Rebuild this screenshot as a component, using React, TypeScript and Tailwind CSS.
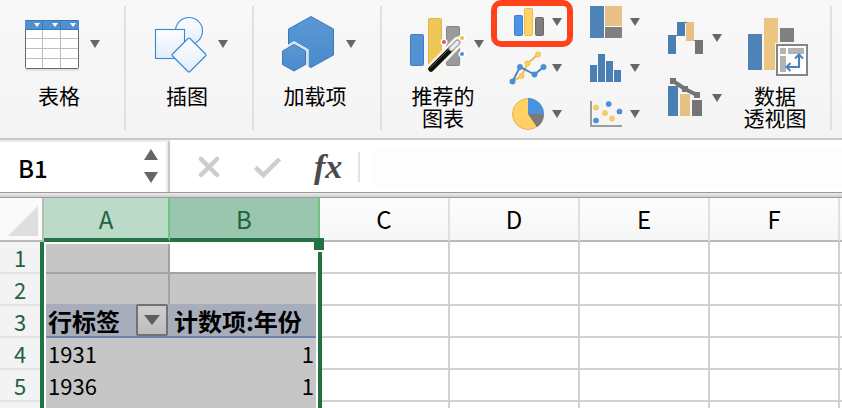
import type { ReactNode } from "react";

const fontStack = "font-['Noto_Sans_CJK_SC',sans-serif]";

function Caret({ className = "" }: { className?: string }) {
  return (
    <svg viewBox="0 0 10 8" className={`h-2 w-2.5 shrink-0 ${className}`} aria-hidden="true">
      <path d="M0 0H10L5 8Z" fill="#666" />
    </svg>
  );
}

function LargeButton({ text, art, caret = true }: { text: string; art: ReactNode; caret?: boolean }) {
  return (
    <button type="button" className="flex items-start">
      <span className="flex w-16 flex-col items-center">
        {art}
        <span className="pl-0.5 text-[21px] leading-[22px] whitespace-pre text-black">{text}</span>
      </span>
      {caret && <Caret className="mt-10" />}
    </button>
  );
}

function ChartButton({ label, tall = false, children }: { label: string; tall?: boolean; children: ReactNode }) {
  return (
    <button
      type="button"
      aria-label={label}
      className={`relative flex items-center gap-1 ${tall ? "h-[60px]" : "h-11"}`}
    >
      {children}
      <Caret />
    </button>
  );
}

function Separator() {
  return <div className="mt-1.5 h-[124px] w-0.5 shrink-0 bg-[#e0e0e0]" />;
}

const TableArt = (
  <svg viewBox="26 0 64 84" className="h-[84px] w-16 overflow-visible" aria-hidden="true">
    <rect x="26" y="22" width="53" height="49" rx="1" fill="#000" opacity="0.08" />
    <rect x="25.5" y="20.5" width="53" height="48" rx="1" fill="#fff" stroke="#666" />
    <path d="M26 38.500H78M26 48.500H78M26 58.500H78M42.500 30V68M60.500 30V68" stroke="#bdbdbd" />
    <path d="M25 21a1 1 0 0 1 1-1H78a1 1 0 0 1 1 1V30H25Z" fill="#4f90d0" />
    <path d="M42.500 20V30M60.500 20V30M25 29.500H79M26 20.500H78" stroke="#3a78b8" />
    <path d="M34 23h6l-3 4zM52 23h6l-3 4zM70 23h6l-3 4z" fill="#fff" />
  </svg>
);

const ShapesArt = (
  <svg viewBox="154 0 64 84" className="h-[84px] w-16" aria-hidden="true">
    <defs>
      <linearGradient id="shapeFill" x1="0" y1="0" x2="0" y2="1">
        <stop offset="0" stopColor="#fdfeff" />
        <stop offset="1" stopColor="#e1edf9" />
      </linearGradient>
    </defs>
    <g fill="url(#shapeFill)" stroke="#3a87d9" strokeWidth="1.1">
      <circle cx="189" cy="31" r="13.500" />
      <rect x="155.500" y="29.500" width="29" height="29" />
      <path d="M188 38.500q1-1 2 0L205.500 54q1 1 0 2L190 71.500q-1 1-2 0L172.500 56q-1-1 0-2Z" />
    </g>
  </svg>
);

const AddInsArt = (
  <svg viewBox="282 0 64 84" className="h-[84px] w-16 overflow-visible" aria-hidden="true">
    <defs>
      <linearGradient id="hexFill" x1="0" y1="0" x2="0" y2="1">
        <stop offset="0" stopColor="#5b98d4" />
        <stop offset="1" stopColor="#4a89cc" />
      </linearGradient>
    </defs>
    <path d="M311 16.500L333.500 29V55L311 67.500L288.500 55V29Z" fill="url(#hexFill)" stroke="#3a79bd" />
    <path d="M294 41L308.500 49.500V67L294 74L280 66V50Z" fill="#f6f6f6" />
    <path d="M288 45L294 41.500L308.500 49.500V66L306 64.500V52L294 45L288 48Z" fill="#d3e1f1" />
    <path d="M294 44.500L305.500 51V64.500L294 71L282.500 64.500V51Z" fill="url(#hexFill)" stroke="#3a79bd" />
  </svg>
);

const RecommendedArt = (
  <svg viewBox="410 0 64 84" className="h-[84px] w-16" aria-hidden="true">
    <rect x="410.500" y="34.500" width="13" height="31" rx="1" fill="#5393d3" stroke="#3c7fc4" />
    <rect x="428.500" y="18.500" width="13" height="47" rx="1" fill="#efc658" stroke="#ddb54b" />
    <rect x="446.500" y="26.500" width="13" height="39" rx="1" fill="#9b9b9e" stroke="#858587" />
    <path d="M431 69.500L458 42" stroke="#faf4e5" strokeWidth="11" strokeLinecap="round" />
    <circle cx="444" cy="42" r="3.500" fill="#fff" />
    <circle cx="462" cy="38" r="3.500" fill="#fff" />
    <circle cx="462" cy="54" r="3.500" fill="#fff" />
    <path d="M431 69L451 49" stroke="#111" strokeWidth="5.500" strokeLinecap="round" />
    <path d="M430 68L450 48" stroke="#555" />
    <path d="M451.500 48.500L457.500 42.500" stroke="#9a9da5" strokeWidth="6" strokeLinecap="round" />
    <path d="M451.500 48.500L457.500 42.500" stroke="#e9edf2" strokeWidth="3.500" strokeLinecap="round" />
    <circle cx="444" cy="42" r="2" fill="#d9534f" />
    <circle cx="462" cy="38" r="2" fill="#f0c040" />
    <circle cx="462" cy="54" r="2" fill="#4b91d8" />
  </svg>
);

const PivotArt = (
  <svg viewBox="742 0 64 84" className="h-[84px] w-16 overflow-visible" aria-hidden="true">
    <rect x="748" y="34" width="14" height="36" fill="#4f83b7" />
    <rect x="764" y="18" width="14" height="52" fill="#ebc681" />
    <rect x="780" y="28" width="14" height="14" fill="#808080" />
    <rect x="775" y="43" width="34" height="34" fill="#f6f6f6" />
    <rect x="777" y="45" width="30" height="30" fill="#fff" stroke="#858585" strokeWidth="2" />
    <path d="M780 48h6v6h-6zM788 48h16v6h-16zM780 56h6v16h-6z" fill="#b3b3b3" />
    <path d="M788 67H799V56" fill="none" stroke="#f8f8f8" strokeWidth="5" />
    <path
      d="M788 67H799V56M790.500 63L786.500 67L790.500 71M795 58.500L799 54.500L803 58.500"
      fill="none"
      stroke="#4782ba"
      strokeWidth="2"
    />
  </svg>
);

function Ribbon() {
  return (
    <header className="flex h-[140px] shrink-0 items-start border-b-2 border-[#c8c8c8] bg-linear-to-b from-[#f8f8f8] to-[#f4f4f4]">
      <div className="flex w-[124px] shrink-0 pl-[26px]">
        <LargeButton text="表格" art={TableArt} />
      </div>
      <Separator />
      <div className="flex w-[126px] shrink-0 pl-7">
        <LargeButton text="插图" art={ShapesArt} />
      </div>
      <Separator />
      <div className="flex w-[126px] shrink-0 pl-7">
        <LargeButton text="加载项" art={AddInsArt} />
      </div>
      <Separator />
      <div className="flex shrink-0 items-start gap-6 pr-6 pl-7">
        <LargeButton text={"推荐的\n图表"} art={RecommendedArt} />
        <div className="flex flex-col gap-0.5">
          <ChartButton label="柱形图">
            <svg viewBox="508 0 40 44" className="h-11 w-10" aria-hidden="true">
              <rect x="514.500" y="15.500" width="8" height="20" rx="1" fill="#4a94e3" stroke="#3a80cc" />
              <rect x="524.500" y="8.500" width="8" height="27" rx="1" fill="#ffd264" stroke="#e6bb56" />
              <rect x="535.500" y="17.500" width="8" height="18" rx="1" fill="#7d7d7d" stroke="#6a6a6a" />
            </svg>
            <span className="absolute top-0 -left-[17px] h-[47px] w-[82px] rounded-[10px] border-[6px] border-[#ff421c]" />
          </ChartButton>
          <ChartButton label="折线图">
            <svg viewBox="508 46 40 44" className="h-11 w-10" aria-hidden="true">
              <path d="M512.500 81.500L521.500 76L527.500 63.500L538 54.500" fill="none" stroke="#e6b94e" strokeWidth="1.800" />
              <g fill="#fbcd5e" stroke="#e6b94e" strokeWidth="0.500">
                <circle cx="521.500" cy="76" r="2.700" />
                <circle cx="527.500" cy="63.500" r="2.700" />
                <circle cx="538" cy="54.500" r="2.700" />
              </g>
              <path d="M512.500 81.500L520 67L534.500 74.500L543.500 67" fill="none" stroke="#3f7fc8" strokeWidth="1.800" />
              <g fill="#4a90dd" stroke="#3f7fc8" strokeWidth="0.500">
                <circle cx="512.500" cy="81.500" r="2.700" />
                <circle cx="520" cy="67" r="2.700" />
                <circle cx="534.500" cy="74.500" r="2.700" />
                <circle cx="543.500" cy="67" r="2.700" />
              </g>
            </svg>
          </ChartButton>
          <ChartButton label="饼图">
            <svg viewBox="508 92 40 44" className="h-11 w-10" aria-hidden="true">
              <circle cx="528" cy="114" r="15.500" fill="#ffd164" stroke="#e2b651" />
              <path d="M528 114V98A16 16 0 0 1 544 114Z" fill="#4a92e0" />
              <path d="M528 114H544A16 16 0 0 1 537 127.200Z" fill="#7a7a7a" />
            </svg>
          </ChartButton>
        </div>
        <div className="flex flex-col gap-0.5">
          <ChartButton label="层次结构图">
            <svg viewBox="586 0 40 44" className="h-11 w-10" aria-hidden="true">
              <rect x="590" y="6" width="14" height="32" fill="#4f83b8" />
              <rect x="605" y="6" width="17" height="20" fill="#e9c187" />
              <rect x="605" y="27" width="17" height="11" fill="#808080" />
            </svg>
          </ChartButton>
          <ChartButton label="统计图">
            <svg viewBox="586 46 40 44" className="h-11 w-10" aria-hidden="true">
              <path d="M590 65h7v17h-7zM598 54h7v28h-7zM606 61h7v21h-7zM614 70h7v12h-7z" fill="#4a7fb5" />
            </svg>
          </ChartButton>
          <ChartButton label="散点图">
            <svg viewBox="586 92 40 44" className="h-11 w-10" aria-hidden="true">
              <path d="M591 101V126H622" fill="none" stroke="#808080" strokeWidth="1.500" />
              <g fill="#fbcd5e" stroke="#e6b94e" strokeWidth="0.500">
                <circle cx="596" cy="107.500" r="2.600" />
                <circle cx="605" cy="113" r="2.600" />
                <circle cx="612" cy="118.500" r="2.600" />
              </g>
              <g fill="#4a90dd" stroke="#3f7fc8" strokeWidth="0.500">
                <circle cx="608.700" cy="104" r="2.600" />
                <circle cx="619.500" cy="111.500" r="2.600" />
                <circle cx="596" cy="120.500" r="2.600" />
              </g>
            </svg>
          </ChartButton>
        </div>
        <div className="flex flex-col pt-2">
          <ChartButton label="瀑布图" tall>
            <svg viewBox="664 8 44 60" className="h-[60px] w-11" aria-hidden="true">
              <path d="M668 35h8v19h-8zM677 22h8v14h-8z" fill="#4a7fb3" />
              <rect x="686" y="22" width="8" height="19" fill="#e8c084" />
              <rect x="695" y="40" width="8" height="14" fill="#747474" />
              <path d="M676 35.500H678M684 22.500H687M694 40.500H696" stroke="#777" />
            </svg>
          </ChartButton>
          <ChartButton label="组合图" tall>
            <svg viewBox="664 68 44 60" className="h-[60px] w-11" aria-hidden="true">
              <rect x="668" y="86" width="10" height="30" fill="#4a7fb3" />
              <rect x="680" y="94" width="10" height="22" fill="#e8c084" />
              <rect x="692" y="100" width="10" height="16" fill="#747474" />
              <path d="M673 81L685 89L697 95" fill="none" stroke="#747474" strokeWidth="4" />
              <path d="M670 78h6v6h-6zM682 86h6v6h-6zM694 92h6v6h-6z" fill="#747474" />
            </svg>
          </ChartButton>
        </div>
        <div className="-ml-1">
          <LargeButton text={"数据\n透视图"} art={PivotArt} caret={false} />
        </div>
      </div>
      <Separator />
    </header>
  );
}

function FormulaBar() {
  return (
    <div className="flex h-[52px] shrink-0 bg-white">
      <div className="flex w-[170px] shrink-0 items-center border-t-2 border-r-2 border-t-[#ececec] border-r-[#c8c8c8]">
        <input
          aria-label="名称框"
          defaultValue="B1"
          className="h-full w-36 bg-transparent pl-[18px] text-2xl font-medium text-black outline-none"
        />
        <div className="flex h-full flex-1 flex-col items-start gap-3 border-r-2 border-[#ececec] pt-[7px]">
          <button type="button" aria-label="上一个">
            <svg viewBox="0 0 14 11" className="h-[11px] w-3.5" aria-hidden="true">
              <path d="M0 11H14L7 0Z" fill="#666" />
            </svg>
          </button>
          <button type="button" aria-label="下一个">
            <svg viewBox="0 0 14 11" className="h-[11px] w-3.5" aria-hidden="true">
              <path d="M0 0H14L7 11Z" fill="#666" />
            </svg>
          </button>
        </div>
      </div>
      <div className="flex shrink-0 items-center pt-0.5 pl-7">
        <button type="button" aria-label="取消" className="mr-8">
          <svg viewBox="0 0 24 24" className="size-6" aria-hidden="true">
            <path d="M3 4L19 20M19 4L3 20" stroke="#cdcdcd" strokeWidth="4.500" strokeLinecap="round" />
          </svg>
        </button>
        <button type="button" aria-label="输入" className="mr-[30px]">
          <svg viewBox="0 0 30 24" className="h-6 w-[30px]" aria-hidden="true">
            <path d="M1.500 12.500L9.500 20L25.500 4" fill="none" stroke="#cdcdcd" strokeWidth="4.500" />
          </svg>
        </button>
        <button
          type="button"
          className="w-11 text-left font-['Liberation_Serif',serif] text-[34px] leading-9 font-bold text-[#4a4a4a] italic"
        >
          fx
        </button>
        <div className="h-[30px] w-0.5 bg-[#e2e2e2]" />
      </div>
      <input
        aria-label="编辑栏"
        className="mt-2 mb-1 ml-3.5 min-w-0 flex-1 bg-[#fdfdfd] px-2 text-[22px] outline-none"
      />
    </div>
  );
}

const plainHeaders = ["C", "D", "E", "F", ""];

function RowHeader({ n }: { n: string }) {
  return (
    <th
      scope="row"
      className="border-b-2 border-[#e2e2e2] bg-[#f3f3f3] p-0 pr-1 text-center font-normal text-[#22623d]"
    >
      {n}
    </th>
  );
}

function PlainCells() {
  return (
    <>
      {plainHeaders.map((h, i) => (
        <td key={h + i} className="border-r-2 border-b-2 border-[#d1d1d1] last:border-r-0" />
      ))}
    </>
  );
}

function Sheet() {
  const values = [
    { n: "4", year: "1931", count: "1" },
    { n: "5", year: "1936", count: "1" },
    { n: "", year: "", count: "" },
  ];
  return (
    <main className="relative min-h-0 flex-1 overflow-hidden bg-white">
      <table className="w-full table-fixed border-separate border-spacing-0 text-[22px] leading-7">
        <colgroup>
          <col className="w-11" />
          <col className="w-[126px]" />
          <col className="w-[150px]" />
          <col className="w-[130px]" />
          <col className="w-[130px]" />
          <col className="w-[130px]" />
          <col className="w-[130px]" />
          <col />
        </colgroup>
        <thead className="text-2xl">
          <tr className="h-11">
            <td className="border-r-2 border-b-2 border-[#b9b9b9] bg-[#fafafa] p-0">
              <svg viewBox="0 0 42 42" className="block h-[42px] w-[42px]" aria-hidden="true">
                <path d="M8 38H38V8Z" fill="#dedede" />
              </svg>
            </td>
            <th
              scope="col"
              className="border-r-2 border-b-4 border-r-[#6fc57c] border-b-[#217346] bg-[#bcdac8] p-0 pt-0.5 font-normal text-[#22623d]"
            >
              A
            </th>
            <th
              scope="col"
              className="border-r-2 border-b-4 border-r-[#6fc57c] border-b-[#217346] bg-[#9ac6af] p-0 pt-0.5 font-normal text-[#22623d]"
            >
              B
            </th>
            {plainHeaders.map((h, i) => (
              <th
                key={h + i}
                scope="col"
                className="border-r-2 border-b-2 border-r-[#e0e0e0] border-b-[#b9b9b9] bg-linear-to-b from-[#fdfdfd] to-[#f6f6f6] p-0 font-normal text-black last:border-r-0"
              >
                {h}
              </th>
            ))}
          </tr>
        </thead>
        <tbody>
          <tr className="h-8">
            <RowHeader n="1" />
            <td className="border-r-2 border-b-2 border-[#a3a3a3] bg-[#c6c6c6]" />
            <td className="border-b-2 border-[#a3a3a3] bg-white" />
            <PlainCells />
          </tr>
          <tr className="h-8">
            <RowHeader n="2" />
            <td className="border-r-2 border-b-2 border-r-[#a3a3a3] border-b-[#a7adbb] bg-[#c6c6c6]" />
            <td className="border-b-2 border-[#a7adbb] bg-[#c6c6c6]" />
            <PlainCells />
          </tr>
          <tr className="h-8">
            <RowHeader n="3" />
            <td className="border-b-2 border-[#6e84b0] bg-[#a7adbb] p-0 pl-1">
              <div className="flex h-[30px] items-center justify-between pr-0.5">
                <span className="text-2xl leading-[30px] font-bold whitespace-nowrap">行标签</span>
                <button
                  type="button"
                  aria-label="筛选"
                  className="-mt-0.5 flex h-8 w-8 items-center justify-center rounded-xs border-2 border-[#6f7276] bg-linear-to-b from-[#cecece] to-[#bdbdbd]"
                >
                  <svg viewBox="0 0 16 10" className="h-2.5 w-4" aria-hidden="true">
                    <path d="M0 0H16L8 10Z" fill="#5f5f5f" />
                  </svg>
                </button>
              </div>
            </td>
            <td className="border-b-2 border-[#6e84b0] bg-[#a7adbb] p-0 pl-1">
              <span className="block text-2xl leading-[30px] font-bold whitespace-nowrap">计数项:年份</span>
            </td>
            <PlainCells />
          </tr>
          {values.map((v) => (
            <tr key={v.n} className="h-8">
              <RowHeader n={v.n} />
              <td className="bg-[#c6c6c6] p-0 pb-0.5 pl-1">{v.year}</td>
              <td className="bg-[#c6c6c6] p-0 pr-1.5 pb-0.5 text-right">{v.count}</td>
              <PlainCells />
            </tr>
          ))}
        </tbody>
      </table>
      <div className="pointer-events-none absolute top-11 bottom-0 left-10 w-[282px] border-x-4 border-[#217346] shadow-[inset_2px_2px_0_white,inset_-2px_0_0_white]" />
      <div className="absolute top-10 left-[314px] h-3.5 w-2.5 border-b-2 border-white bg-[#217346]" />
    </main>
  );
}

export default function App() {
  return (
    <div className={`flex h-screen flex-col overflow-hidden bg-white text-black ${fontStack}`}>
      <Ribbon />
      <FormulaBar />
      <div className="h-1.5 shrink-0 border-y border-[#9b9b9b] bg-linear-to-b from-[#ededed] to-[#cfcfcf]" />
      <Sheet />
    </div>
  );
}
